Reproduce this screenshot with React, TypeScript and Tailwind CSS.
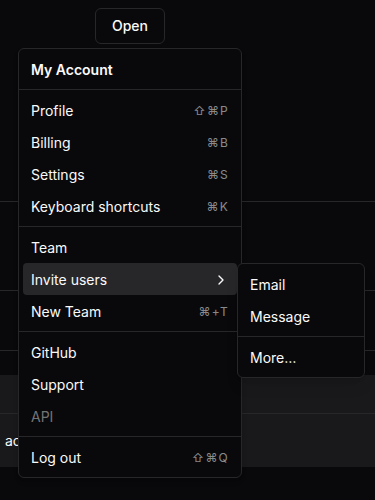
import React from "react";
import { ChevronRight } from "lucide-react";

function Item({
  label,
  shortcut,
  disabled,
  active,
  sub,
}: {
  label: string;
  shortcut?: string;
  disabled?: boolean;
  active?: boolean;
  sub?: boolean;
}) {
  return (
    <div
      className={`flex h-8 items-center rounded-[4px] px-2 pt-px text-sm ${
        active ? "bg-[#27272a]" : ""
      } ${disabled ? "text-[#fafafa]/45" : "text-[#fafafa]"}`}
    >
      <span>{label}</span>
      {shortcut && (
        <span className="ml-auto text-xs tracking-widest text-[#fafafa]/55">
          {shortcut}
        </span>
      )}
      {sub && <ChevronRight className="ml-auto h-4 w-4 text-[#fafafa]" strokeWidth={2} />}
    </div>
  );
}

function Sep() {
  return <div className="-mx-1 my-1 h-px bg-[#27272a]" />;
}

export default function App() {
  return (
    <div
      className="relative min-h-[500px] w-[375px] overflow-hidden bg-[#09090b] text-[#fafafa]"
      style={{ fontFamily: "Inter, 'Noto Sans', sans-serif" }}
    >
      {/* background page */}
      <div className="h-[202px] border-b border-[#27272a]">
        <div className="ml-[18px] flex w-[224px] justify-center pt-2">
          <button className="h-9 rounded-md border border-[#27272a] bg-[#09090b] px-4 text-sm font-medium text-[#fafafa]">
            Open
          </button>
        </div>
      </div>
      <div className="h-[89px] border-b border-[#27272a]" />
      <div className="h-[60px] border-b border-[#27272a]" />
      <div className="h-[24px]" />
      <div className="bg-[#19191c]">
        <div className="h-[39px] border-b border-[#27272a]" />
        <div className="flex h-[53px] items-center pl-[5px] text-sm text-[#fafafa]">
          account
        </div>
      </div>

      {/* dropdown menu */}
      <div className="absolute left-[18px] top-[48px] w-[224px] rounded-md border border-[#27272a] bg-[#09090b] p-1 shadow-md">
        <div className="flex h-8 items-center px-2 pt-px text-sm font-semibold">My Account</div>
        <Sep />
        <Item label="Profile" shortcut="⇧⌘P" />
        <Item label="Billing" shortcut="⌘B" />
        <Item label="Settings" shortcut="⌘S" />
        <Item label="Keyboard shortcuts" shortcut="⌘K" />
        <Sep />
        <Item label="Team" />
        <Item label="Invite users" active sub />
        <Item label="New Team" shortcut="⌘+T" />
        <Sep />
        <Item label="GitHub" />
        <Item label="Support" />
        <Item label="API" disabled />
        <Sep />
        <Item label="Log out" shortcut="⇧⌘Q" />
      </div>

      {/* submenu */}
      <div className="absolute left-[237px] top-[263px] w-[128px] rounded-md border border-[#27272a] bg-[#09090b] p-1 shadow-lg">
        <Item label="Email" />
        <Item label="Message" />
        <Sep />
        <Item label="More…" />
      </div>
    </div>
  );
}
